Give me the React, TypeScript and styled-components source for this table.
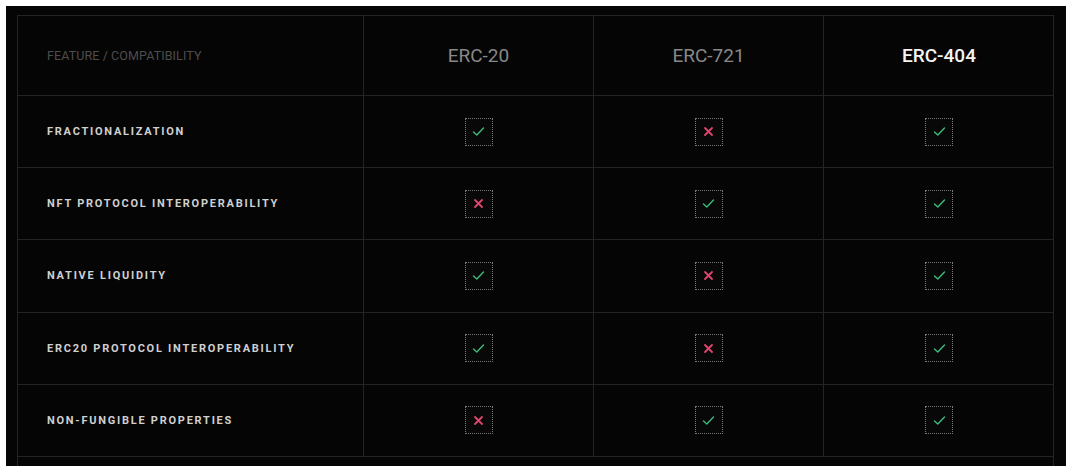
import React from "react";
import styled, { createGlobalStyle } from "styled-components";

const GlobalStyle = createGlobalStyle`
  html, body {
    margin: 0;
    background: #ffffff;
    overflow: hidden;
  }
  * {
    box-sizing: border-box;
  }
`;

type Support = boolean;

const columns = ["ERC-20", "ERC-721", "ERC-404"];

const rows: { label: string; values: Support[] }[] = [
  { label: "FRACTIONALIZATION", values: [true, false, true] },
  { label: "NFT PROTOCOL INTEROPERABILITY", values: [false, true, true] },
  { label: "NATIVE LIQUIDITY", values: [true, false, true] },
  { label: "ERC20 PROTOCOL INTEROPERABILITY", values: [true, false, true] },
  { label: "NON-FUNGIBLE PROPERTIES", values: [false, true, true] },
];

const App: React.FC = () => {
  return (
    <>
      <GlobalStyle />
      <Panel>
        <Frame>
          <Table>
            <HeadCell $first>
              <FeatureTitle>FEATURE / COMPATIBILITY</FeatureTitle>
            </HeadCell>
            {columns.map((c, i) => (
              <HeadCell key={c}>
                <StandardName $highlight={i === columns.length - 1}>{c}</StandardName>
              </HeadCell>
            ))}
            {rows.map((row) => (
              <React.Fragment key={row.label}>
                <Cell $first>
                  <RowLabel>{row.label}</RowLabel>
                </Cell>
                {row.values.map((v, i) => (
                  <Cell key={i}>
                    <Mark>{v ? <CheckIcon /> : <CrossIcon />}</Mark>
                  </Cell>
                ))}
              </React.Fragment>
            ))}
          </Table>
        </Frame>
      </Panel>
    </>
  );
};

export default App;

const CheckIcon: React.FC = () => (
  <svg width="13" height="11" viewBox="0 0 13 11" fill="none">
    <path d="M1.5 6 L4.8 9 L11.5 2" stroke="#3dbb7c" strokeWidth="1.4" strokeLinecap="round" strokeLinejoin="round" />
  </svg>
);

const CrossIcon: React.FC = () => (
  <svg width="11" height="11" viewBox="0 0 11 11" fill="none">
    <path d="M2 2 L9 9 M9 2 L2 9" stroke="#e0466c" strokeWidth="1.8" strokeLinecap="round" />
  </svg>
);

const Panel = styled.div`
  margin: 6px 0 0 6px;
  width: 1060px;
  height: 460px;
  background: #050505;
  padding: 9px 0 0 11px;
  overflow: hidden;
  font-family: Roboto, "Liberation Sans", Arial, sans-serif;
`;

const Frame = styled.div`
  width: 1037px;
  height: 100%;
  border-left: 1px solid #242424;
  border-right: 1px solid #242424;
`;

const Table = styled.div`
  display: grid;
  grid-template-columns: 346px repeat(3, 230px);
  grid-template-rows: 80px;
  grid-auto-rows: 72.2px;
  border-top: 1px solid #242424;
`;

const HeadCell = styled.div<{ $first?: boolean }>`
  display: flex;
  align-items: center;
  justify-content: ${(p) => (p.$first ? "flex-start" : "center")};
  padding-left: ${(p) => (p.$first ? "29px" : "0")};
  border-bottom: 1px solid #242424;
  border-right: 1px solid #242424;
  &:nth-child(4) {
    border-right: none;
  }
`;

const Cell = styled.div<{ $first?: boolean }>`
  display: flex;
  align-items: center;
  justify-content: ${(p) => (p.$first ? "flex-start" : "center")};
  padding-left: ${(p) => (p.$first ? "29px" : "0")};
  border-bottom: 1px solid #242424;
  border-right: 1px solid #242424;
  &:nth-child(4n) {
    border-right: none;
  }
`;

const FeatureTitle = styled.span`
  font-size: 12.5px;
  color: #4d4d4d;
  letter-spacing: 0.1px;
`;

const StandardName = styled.span<{ $highlight?: boolean }>`
  font-size: 19px;
  font-weight: ${(p) => (p.$highlight ? 500 : 400)};
  color: ${(p) => (p.$highlight ? "#f4f4f4" : "#888888")};
`;

const RowLabel = styled.span`
  font-size: 11px;
  font-weight: 700;
  letter-spacing: 1.75px;
  color: #d0d0d0;
`;

const Mark = styled.div`
  width: 28px;
  height: 28px;
  border: 1px dotted #7a7a7a;
  display: flex;
  align-items: center;
  justify-content: center;
  background: #080808;
`;
